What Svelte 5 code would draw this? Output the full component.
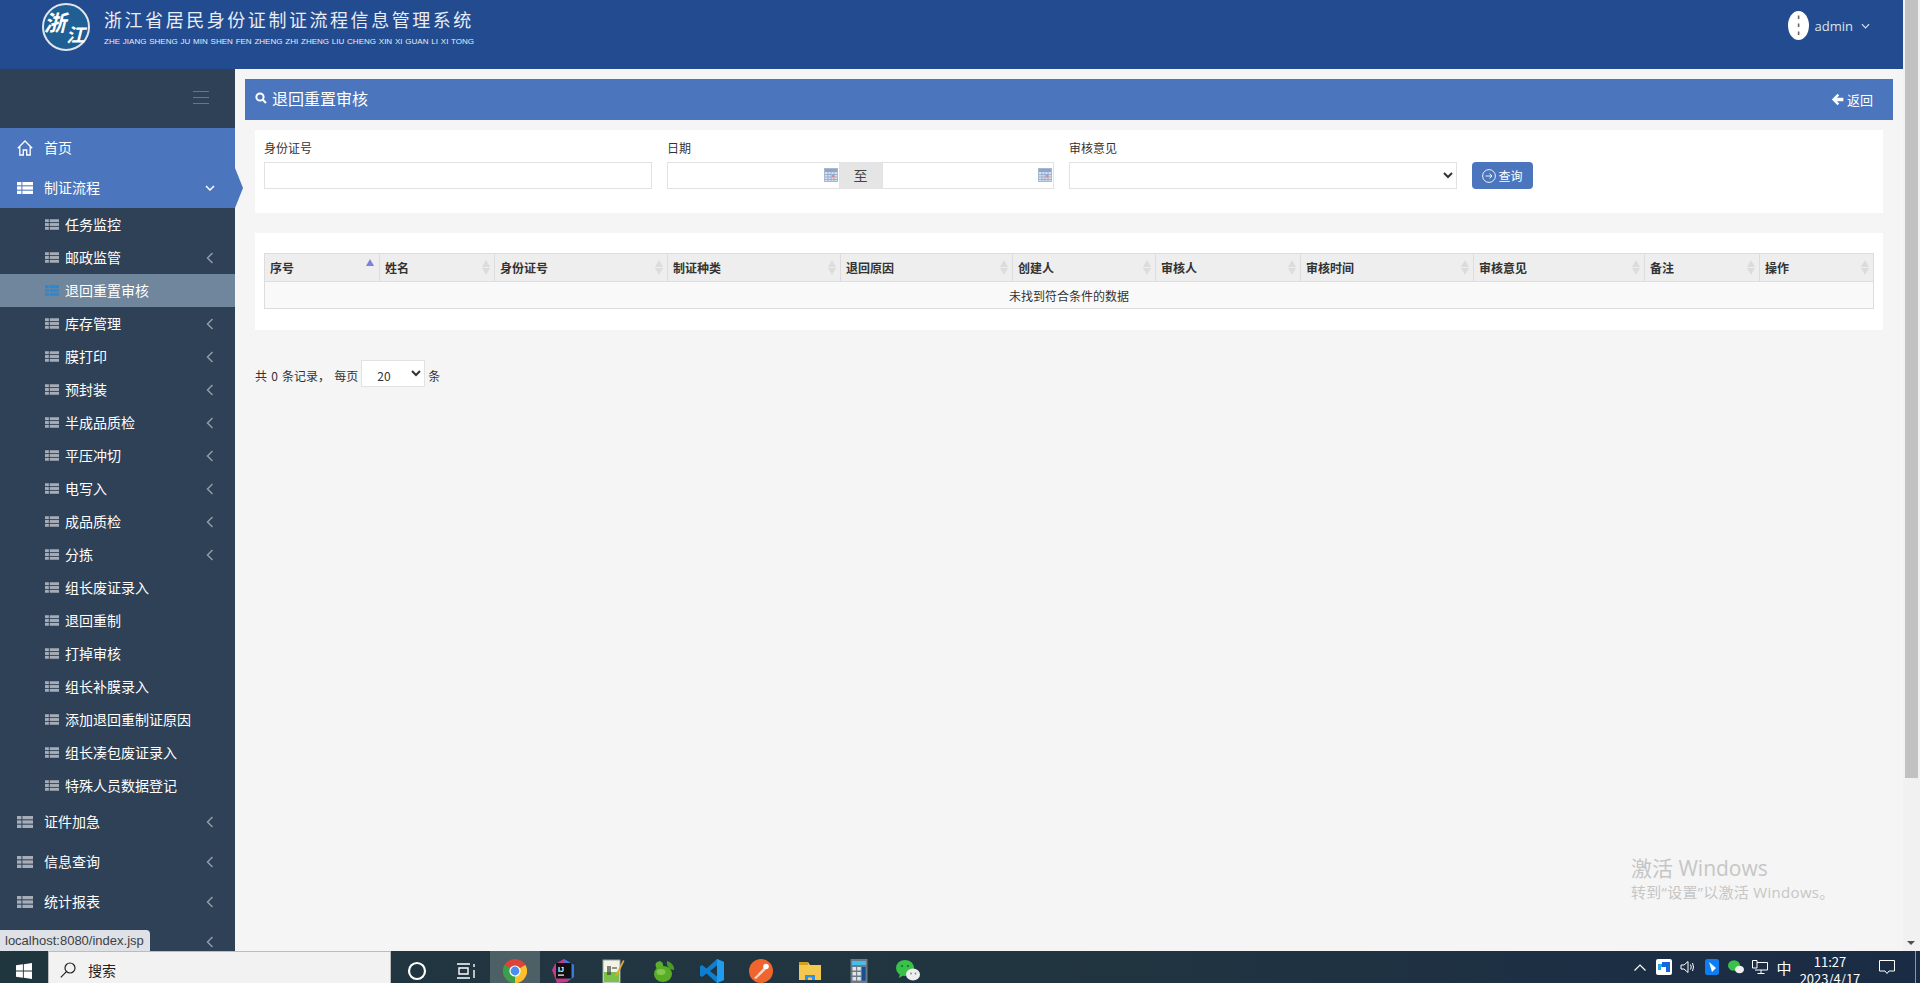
<script>
    const subMenu = [
        { name: '任务监控' },
        { name: '邮政监管', more: true },
        { name: '退回重置审核', active: true },
        { name: '库存管理', more: true },
        { name: '膜打印', more: true },
        { name: '预封装', more: true },
        { name: '半成品质检', more: true },
        { name: '平压冲切', more: true },
        { name: '电写入', more: true },
        { name: '成品质检', more: true },
        { name: '分拣', more: true },
        { name: '组长废证录入' },
        { name: '退回重制' },
        { name: '打掉审核' },
        { name: '组长补膜录入' },
        { name: '添加退回重制证原因' },
        { name: '组长凑包废证录入' },
        { name: '特殊人员数据登记' }
    ];

    const lowerMenu = ['证件加急', '信息查询', '统计报表', ''];

    const columns = [
        { title: '序号', width: 115, sorted: true },
        { title: '姓名', width: 115 },
        { title: '身份证号', width: 173 },
        { title: '制证种类', width: 173 },
        { title: '退回原因', width: 172 },
        { title: '创建人', width: 143 },
        { title: '审核人', width: 145 },
        { title: '审核时间', width: 173 },
        { title: '审核意见', width: 171 },
        { title: '备注', width: 115 },
        { title: '操作', width: 114 }
    ];
</script>

{#snippet listIcon()}
    <svg class="list-icon" viewBox="0 0 16 12">
        <rect x="0" y="0" width="4.4" height="3.3" />
        <rect x="5.4" y="0" width="10.6" height="3.3" />
        <rect x="0" y="4.35" width="4.4" height="3.3" />
        <rect x="5.4" y="4.35" width="10.6" height="3.3" />
        <rect x="0" y="8.7" width="4.4" height="3.3" />
        <rect x="5.4" y="8.7" width="10.6" height="3.3" />
    </svg>
{/snippet}

{#snippet chevronLeft()}
    <svg class="chev-left" viewBox="0 0 8 12"><path d="M6.5 1 L1.5 6 L6.5 11" /></svg>
{/snippet}

{#snippet calendar()}
    <svg class="calendar" viewBox="0 0 14 14">
        <rect x="0.5" y="0.5" width="13" height="13" fill="#d5dff0" stroke="#a9b7cf" />
        <rect x="1" y="1" width="12" height="3" fill="#8fa5c8" />
        <path d="M1 6.5h12M1 9h12M1 11.5h12M4 4v9M7 4v9M10 4v9" stroke="#8ea6cc" stroke-width="0.8" />
        <rect x="8" y="7" width="2.4" height="2.2" fill="#e08a7a" />
    </svg>
{/snippet}

<div class="page">
    <div class="upper">
        <header class="topbar">
            <div class="brand">
                <svg class="logo" viewBox="0 0 48 48">
                    <circle cx="24" cy="24" r="23" fill="#1f5f94" stroke="#dfe6ee" stroke-width="2" />
                    <text x="2" y="28" class="logo-a">浙</text>
                    <text x="24" y="39" class="logo-b">江</text>
                </svg>
                <div class="brand-text">
                    <div class="brand-cn">浙江省居民身份证制证流程信息管理系统</div>
                    <div class="brand-en">ZHE JIANG SHENG JU MIN SHEN FEN ZHENG ZHI ZHENG LIU CHENG XIN XI GUAN LI XI TONG</div>
                </div>
            </div>
            <div class="user">
                <svg class="avatar" viewBox="0 0 21 29">
                    <ellipse cx="10.5" cy="14.5" rx="10.5" ry="14.5" fill="#fff" />
                    <rect x="9.8" y="4.5" width="1.6" height="3.5" fill="#666" />
                    <rect x="9.8" y="12.5" width="1.6" height="3.5" fill="#666" />
                    <rect x="9.8" y="20.5" width="1.6" height="3.5" fill="#666" />
                </svg>
                <span>admin</span>
                <svg class="user-chev" viewBox="0 0 10 6"><path d="M1 1 L5 5 L9 1" /></svg>
            </div>
        </header>

        <div class="body">
            <nav class="sidebar">
                <div class="toggle">
                    <span></span><span></span><span></span>
                </div>
                <div class="top-item blue">
                    <svg class="home" viewBox="0 0 16 16">
                        <path d="M0.8 8.2 L8 1 L15.2 8.2 M2.8 6.8 V15 H6.3 V10 H9.7 V15 H13.2 V6.8" />
                    </svg>
                    <span>首页</span>
                </div>
                <div class="top-item blue open">
                    {@render listIcon()}
                    <span>制证流程</span>
                    <svg class="chev-down" viewBox="0 0 10 6"><path d="M1 1 L5 5 L9 1" /></svg>
                </div>
                {#each subMenu as item}
                    <div class="sub-item" class:active={item.active}>
                        {@render listIcon()}
                        <span>{item.name}</span>
                        {#if item.more}{@render chevronLeft()}{/if}
                    </div>
                {/each}
                {#each lowerMenu as name}
                    <div class="top-item">
                        {@render listIcon()}
                        <span>{name}</span>
                        {@render chevronLeft()}
                    </div>
                {/each}
            </nav>

            <main class="content">
                <div class="title-bar">
                    <svg class="search" viewBox="0 0 12 12">
                        <circle cx="5" cy="5" r="3.6" />
                        <path d="M7.8 7.8 L11 11" />
                    </svg>
                    <span class="title">退回重置审核</span>
                    <a class="back" href="#back">
                        <svg viewBox="0 0 12 12"><path d="M6 0.8 L0.8 6 L6 11.2 L7.6 9.6 L5.4 7.6 H11.4 V4.4 H5.4 L7.6 2.4 Z" /></svg>
                        返回
                    </a>
                </div>

                <section class="card filter">
                    <div class="field">
                        <label for="idcard">身份证号</label>
                        <input id="idcard" type="text" />
                    </div>
                    <div class="field narrow">
                        <label for="from">日期</label>
                        <div class="date-range">
                            <div class="date-input">
                                <input id="from" type="text" />
                                {@render calendar()}
                            </div>
                            <span class="addon">至</span>
                            <div class="date-input">
                                <input type="text" />
                                {@render calendar()}
                            </div>
                        </div>
                    </div>
                    <div class="field">
                        <label for="opinion">审核意见</label>
                        <select id="opinion"><option></option></select>
                    </div>
                    <button class="query" type="button">
                        <svg viewBox="0 0 14 14">
                            <circle cx="7" cy="7" r="6.4" />
                            <path d="M3.5 7 H10 M7.5 4.5 L10 7 L7.5 9.5" />
                        </svg>
                        查询
                    </button>
                </section>

                <section class="card table-card">
                    <table>
                        <colgroup>
                            {#each columns as col}
                                <col style="width: {col.width}px" />
                            {/each}
                        </colgroup>
                        <thead>
                            <tr>
                                {#each columns as col}
                                    <th>
                                        {col.title}
                                        <span class="sort" class:sorted={col.sorted}>
                                            <i class="up"></i>
                                            {#if !col.sorted}<i class="down"></i>{/if}
                                        </span>
                                    </th>
                                {/each}
                            </tr>
                        </thead>
                        <tbody>
                            <tr><td colspan={columns.length}>未找到符合条件的数据</td></tr>
                        </tbody>
                    </table>
                </section>

                <div class="pager">
                    <span>共 0 条记录， 每页</span>
                    <select><option>20</option></select>
                    <span>条</span>
                </div>
            </main>
        </div>
    </div>

    <footer class="taskbar">
        <div class="start">
            <svg viewBox="0 0 16 16"><path d="M0 2.3 L6.9 1.3 V7.5 H0 Z M7.8 1.2 L16 0 V7.5 H7.8 Z M0 8.4 H6.9 V14.7 L0 13.7 Z M7.8 8.4 H16 V16 L7.8 14.8 Z" /></svg>
        </div>
        <div class="searchbox">
            <svg viewBox="0 0 16 16"><circle cx="10" cy="6" r="5" /><path d="M6.4 9.6 L0.8 15.4" /></svg>
            <span>搜索</span>
        </div>
        <div class="apps">
            <div class="app">
                <svg viewBox="0 0 24 24" class="plain"><circle cx="12" cy="12" r="8" fill="none" stroke="#fff" stroke-width="2.2" /></svg>
            </div>
            <div class="app">
                <svg viewBox="0 0 24 24" class="plain"><path d="M3 5h13M3 19h13M5 9h9v6H5zM20 5v3M20 11v8" fill="none" stroke="#fff" stroke-width="1.4" /></svg>
            </div>
            <div class="app current">
                <svg viewBox="0 0 24 24">
                    <circle cx="12" cy="12" r="12" fill="#db4437" />
                    <path d="M12 12 L22.4 6 A12 12 0 0 1 12 24 Z" fill="#fbc02d" />
                    <path d="M12 12 L12 24 A12 12 0 0 1 1.6 6 Z" fill="#3a9f4a" />
                    <circle cx="12" cy="12" r="5.6" fill="#fff" />
                    <circle cx="12" cy="12" r="4.4" fill="#4b8df0" />
                </svg>
            </div>
            <div class="app">
                <svg viewBox="0 0 24 24">
                    <path d="M3 5 L12 0 L22 6 V18 L15 23 L5 24 L0 11 Z" fill="#c43a8e" />
                    <path d="M12 0 L22 6 V18 L16 21 Z" fill="#2f7fe0" />
                    <rect x="4" y="4" width="15.5" height="15.5" fill="#111" />
                    <text x="6" y="12.5" class="ij">IJ</text>
                    <rect x="6" y="15.5" width="6" height="1.2" fill="#fff" />
                </svg>
            </div>
            <div class="app">
                <svg viewBox="0 0 24 24">
                    <rect x="2" y="1" width="17" height="23" fill="#f1f3e6" stroke="#9aa3a0" />
                    <rect x="3" y="13" width="15" height="10" fill="#7cc04a" />
                    <path d="M7 7v9M9 7v9M11 9h5" stroke="#333" stroke-width="1.2" />
                    <path d="M22 1 L15 15 L13.5 18 L16.5 16 L23.5 2 Z" fill="#e8a33a" />
                </svg>
            </div>
            <div class="app">
                <svg viewBox="0 0 24 24">
                    <path d="M5 4 C9 0 13 3 12 8 C8 12 3 9 5 4 Z" fill="#5cae2e" />
                    <path d="M16 2 C20 3 24 7 23 11 C19 11 15 8 16 2 Z" fill="#4a9a25" />
                    <ellipse cx="12" cy="15" rx="9" ry="8" fill="#58ac26" />
                    <ellipse cx="10" cy="13" rx="4.5" ry="3" fill="#83c94f" />
                </svg>
            </div>
            <div class="app">
                <svg viewBox="0 0 24 24">
                    <path d="M17 0 L24 3 V21 L17 24 L6.5 14.5 L2 18 L0 16.8 V7.2 L2 6 L6.5 9.5 Z M17 6.5 L10 12 L17 17.5 Z" fill="#0e7fcf" />
                    <path d="M17 0 L24 3 V21 L17 24 Z" fill="#1f9cf0" />
                </svg>
            </div>
            <div class="app">
                <svg viewBox="0 0 24 24">
                    <circle cx="12" cy="12" r="12" fill="#f0642e" />
                    <path d="M5 19 L15 8.5 L17 10.5 L7 20 Z" fill="#fbd6c4" />
                    <circle cx="17" cy="7.5" r="2.8" fill="#fff" />
                </svg>
            </div>
            <div class="app">
                <svg viewBox="0 0 24 24">
                    <path d="M1 3 H10 L12 6 H23 V21 H1 Z" fill="#f4c84e" />
                    <rect x="1" y="3" width="9" height="3" fill="#d69e1c" />
                    <path d="M7 21 V16 H17 V21 H14 V18.5 H10 V21 Z" fill="#2f8fe0" />
                </svg>
            </div>
            <div class="app">
                <svg viewBox="0 0 24 24">
                    <rect x="3.5" y="0" width="17" height="24" fill="#6d7a85" />
                    <rect x="5" y="2" width="14" height="4" fill="#3fc0ee" />
                    <path d="M5.5 8h3.6v3.6H5.5zM10.2 8h3.6v3.6h-3.6zM5.5 13h3.6v3.6H5.5zM10.2 13h3.6v3.6h-3.6zM5.5 18h3.6v3.6H5.5zM10.2 18h3.6v3.6h-3.6z" fill="#dfe4e8" />
                    <rect x="15" y="8" width="3.6" height="13.6" fill="#174f95" />
                </svg>
            </div>
            <div class="app">
                <svg viewBox="0 0 24 24">
                    <ellipse cx="9" cy="9" rx="9" ry="8" fill="#39c14a" />
                    <path d="M4 14 L3 19 L8 16 Z" fill="#39c14a" />
                    <ellipse cx="17" cy="15.5" rx="7" ry="6" fill="#eeeeee" />
                    <circle cx="6" cy="7" r="1.1" fill="#1d6b2a" />
                    <circle cx="12" cy="7" r="1.1" fill="#1d6b2a" />
                    <circle cx="15" cy="14.5" r="0.9" fill="#888" />
                    <circle cx="19.5" cy="14.5" r="0.9" fill="#888" />
                </svg>
            </div>
        </div>
        <div class="tray">
            <div class="tray-cell">
                <svg viewBox="0 0 12 7" class="t-caret"><path d="M0.5 6.5 L6 1 L11.5 6.5" /></svg>
            </div>
            <div class="tray-cell">
                <svg viewBox="0 0 16 16" class="t-16">
                    <rect width="16" height="16" rx="2" fill="#fff" />
                    <path d="M2 5 H8 V8 H5 V11 H2 Z" fill="#23a9e8" />
                    <path d="M6 3 H14 V13 H10 V8 H6 Z" fill="#1667d9" />
                </svg>
            </div>
            <div class="tray-cell">
                <svg viewBox="0 0 16 16" class="t-16 stroke">
                    <path d="M1 6 H4 L8 2.5 V13.5 L4 10 H1 Z M10.5 5.5 Q12 8 10.5 10.5 M12.5 4 Q14.5 8 12.5 12" />
                </svg>
            </div>
            <div class="tray-cell">
                <svg viewBox="0 0 16 16" class="t-16">
                    <rect width="14" height="16" x="1" rx="2.5" fill="#0f7cf0" />
                    <path d="M5 3 L12 9 L8 13 Z" fill="#fff" />
                </svg>
            </div>
            <div class="tray-cell">
                <svg viewBox="0 0 16 16" class="t-16">
                    <ellipse cx="6" cy="6.5" rx="6" ry="5.2" fill="#39c14a" />
                    <ellipse cx="11.5" cy="10.5" rx="4.5" ry="3.8" fill="#eeeeee" />
                </svg>
            </div>
            <div class="tray-cell">
                <svg viewBox="0 0 16 16" class="t-16 stroke">
                    <path d="M0.5 1.5 H5 V9 H0.5 Z M5 3.5 H15.5 V11 H3 M9 11 V14.5 M5.5 14.5 H12.5" />
                </svg>
            </div>
            <div class="tray-cell ime">中</div>
            <div class="clock">
                <div>11:27</div>
                <div>2023/4/17</div>
            </div>
            <div class="notice">
                <svg viewBox="0 0 16 16" class="t-16 stroke"><path d="M0.5 1.5 H15.5 V12 H10 L8 14.5 L6 12 H0.5 Z" /></svg>
            </div>
            <div class="show-desktop"></div>
        </div>
    </footer>

    <div class="scrollbar">
        <div class="thumb"></div>
        <i class="scroll-arrow"></i>
    </div>
    <div class="status-bubble">localhost:8080/index.jsp</div>
    <div class="watermark">
        <div class="wm-big">激活 Windows</div>
        <div class="wm-small">转到“设置”以激活 Windows。</div>
    </div>
</div>

<style>
    :global(body) {
        margin: 0;
        background: #f5f5f5;
    }
    .page {
        position: relative;
        height: 983px;
        overflow: hidden;
        display: flex;
        flex-direction: column;
        font-family: "Noto Sans CJK SC", "Noto Sans", sans-serif;
        font-size: 12px;
        color: #333;
    }
    .upper {
        flex: 1;
        min-height: 0;
        display: flex;
        flex-direction: column;
        margin-right: 17px;
    }

    /* header */
    .topbar {
        height: 69px;
        flex: none;
        background: #234b8f;
        display: flex;
        justify-content: space-between;
        align-items: flex-start;
    }
    .brand {
        display: flex;
        padding: 3px 0 0 42px;
        gap: 14px;
    }
    .logo {
        width: 48px;
        height: 48px;
    }
    .logo text {
        fill: #fff;
        font-weight: 700;
        font-style: italic;
    }
    .logo-a {
        font-size: 22px;
    }
    .logo-b {
        font-size: 19px;
    }
    .brand-text {
        width: 370px;
        color: #e8edf5;
    }
    .brand-cn {
        font-size: 18px;
        letter-spacing: 2.55px;
        line-height: 28px;
        margin-top: 2px;
        white-space: nowrap;
    }
    .brand-en {
        font-family: "Liberation Sans", sans-serif;
        font-size: 8px;
        line-height: 10px;
        margin-top: 4px;
        white-space: nowrap;
        text-align: justify;
        text-align-last: justify;
    }
    .user {
        display: flex;
        align-items: center;
        height: 29px;
        margin: 11px 33px 0 0;
        color: #dbe3f0;
        font-family: "Open Sans", sans-serif;
        font-size: 13px;
    }
    .avatar {
        width: 21px;
        height: 29px;
        margin-right: 6px;
    }
    .user-chev {
        width: 9px;
        height: 6px;
        margin-left: 8px;
        fill: none;
        stroke: #dbe3f0;
        stroke-width: 1.3;
    }

    .body {
        flex: 1;
        min-height: 0;
        display: flex;
    }

    /* sidebar */
    .sidebar {
        width: 235px;
        flex: none;
        background: #2f4156;
        color: #fff;
        font-size: 14px;
    }
    .toggle {
        height: 59px;
        padding: 22px 26px 0 0;
        box-sizing: border-box;
        display: flex;
        flex-direction: column;
        align-items: flex-end;
        gap: 5px;
    }
    .toggle span {
        width: 16px;
        height: 1px;
        background: #67778a;
    }
    .top-item {
        position: relative;
        height: 40px;
        display: flex;
        align-items: center;
        padding-left: 17px;
    }
    .top-item.blue {
        background: #4b76bd;
    }
    .top-item.open::after {
        content: "";
        position: absolute;
        left: 235px;
        top: 0;
        width: 8px;
        height: 40px;
        background: #4b76bd;
        clip-path: polygon(0 0, 100% 50%, 0 100%);
    }
    .top-item span {
        margin: 0 0 2px 11px;
    }
    .top-item .list-icon {
        width: 16px;
        height: 12px;
        fill: #a6adb8;
    }
    .top-item.blue .list-icon {
        fill: #fff;
    }
    .home {
        width: 16px;
        height: 16px;
        fill: none;
        stroke: #fff;
        stroke-width: 1.3;
    }
    .chev-down {
        position: absolute;
        left: 205px;
        top: 17px;
        width: 10px;
        height: 6px;
        fill: none;
        stroke: #fff;
        stroke-width: 1.5;
    }
    .chev-left {
        position: absolute;
        left: 206px;
        top: 50%;
        margin-top: -6px;
        width: 8px;
        height: 12px;
        fill: none;
        stroke: #8f9caa;
        stroke-width: 1.5;
    }
    .sub-item {
        position: relative;
        height: 33px;
        display: flex;
        align-items: center;
        padding-left: 45px;
    }
    .sub-item span {
        margin: 0 0 2px 6px;
    }
    .sub-item .list-icon {
        width: 14px;
        height: 11px;
        fill: #a6adb8;
    }
    .sub-item.active {
        background: #6f869c;
    }
    .sub-item.active .list-icon {
        fill: #2f87d0;
    }

    /* main */
    .content {
        flex: 1;
        min-width: 0;
        padding: 10px;
    }
    .title-bar {
        height: 41px;
        box-sizing: border-box;
        background: #4b76bd;
        color: #fff;
        display: flex;
        align-items: center;
        padding: 0 20px 0 10px;
    }
    .search {
        width: 12px;
        height: 12px;
        margin-bottom: 3px;
        fill: none;
        stroke: #fff;
        stroke-width: 2;
    }
    .title {
        margin: 0 0 4px 5px;
        font-size: 16px;
    }
    .back {
        margin-left: auto;
        display: flex;
        align-items: center;
        gap: 3px;
        color: #fff;
        font-size: 13px;
        text-decoration: none;
    }
    .back svg {
        width: 13px;
        height: 13px;
        fill: #fff;
    }
    .card {
        background: #fff;
        margin: 10px 10px 0;
    }

    /* filter */
    .filter {
        height: 83px;
        box-sizing: border-box;
        padding: 10px 9px 0;
        display: flex;
        gap: 15px;
    }
    .field {
        width: 388px;
    }
    .field.narrow {
        width: 387px;
    }
    .field label {
        display: block;
        line-height: 16px;
        margin-bottom: 6px;
    }
    input,
    select {
        box-sizing: border-box;
        width: 100%;
        height: 27px;
        border: 1px solid #e2e2e2;
        background: #fff;
        border-radius: 0;
        font: inherit;
        color: #333;
        outline: none;
    }
    .date-range {
        display: flex;
        height: 27px;
    }
    .date-input {
        position: relative;
        flex: 1;
    }
    .calendar {
        position: absolute;
        right: 2px;
        top: 6px;
        width: 14px;
        height: 14px;
    }
    .addon {
        width: 42px;
        flex: none;
        background: #e5e5e5;
        color: #444;
        font-size: 14px;
        text-align: center;
        line-height: 27px;
    }
    .query {
        align-self: flex-start;
        margin-top: 22px;
        width: 61px;
        height: 27px;
        border: none;
        border-radius: 4px;
        background: #4b76bd;
        color: #fff;
        font: inherit;
        display: flex;
        align-items: center;
        justify-content: center;
        gap: 2px;
        padding: 0;
    }
    .query svg {
        width: 14px;
        height: 14px;
        fill: none;
        stroke: #fff;
        stroke-width: 0.9;
    }

    /* table */
    .table-card {
        margin-top: 20px;
        padding: 20px 10px 21px 9px;
    }
    table {
        width: 100%;
        table-layout: fixed;
        border-collapse: collapse;
    }
    th,
    td {
        border: 1px solid #ddd;
        padding: 0;
    }
    th {
        position: relative;
        height: 27px;
        background: #eee;
        text-align: left;
        padding-left: 5px;
        font-weight: 700;
        color: #333;
    }
    td {
        height: 26px;
        background: #f9f9f9;
        text-align: center;
    }
    .sort {
        position: absolute;
        right: 4px;
        top: 6px;
    }
    .sort i {
        display: block;
        width: 0;
        height: 0;
        border-left: 4.5px solid transparent;
        border-right: 4.5px solid transparent;
    }
    .sort .up {
        border-bottom: 7px solid #dcdcdc;
        margin-bottom: 1px;
    }
    .sort .down {
        border-top: 7px solid #dcdcdc;
    }
    .sort.sorted {
        top: 5px;
        right: 5px;
    }
    .sort.sorted .up {
        border-bottom-color: #7b82dc;
    }

    .pager {
        margin: 30px 10px 0;
        display: flex;
        align-items: center;
        gap: 3px;
        word-spacing: 1.5px;
    }
    .pager span {
        padding-top: 4px;
    }
    .pager select {
        width: 64px;
        padding: 3px 0 0 11px;
    }

    /* taskbar */
    .taskbar {
        position: relative;
        height: 32px;
        flex: none;
        overflow: hidden;
        display: flex;
        background: linear-gradient(90deg, #20363f 0%, #213540 55%, #1a2b45 100%);
    }
    .start {
        width: 48px;
        flex: none;
        padding: 12px 0 0 16px;
        box-sizing: border-box;
    }
    .start svg {
        display: block;
        width: 16px;
        height: 16px;
        fill: #fff;
    }
    .searchbox {
        width: 343px;
        flex: none;
        box-sizing: border-box;
        background: #f2f2f2;
        border-top: 1px solid #bcbcbc;
        border-left: 1px solid #bcbcbc;
        border-right: 1px solid #bcbcbc;
        display: flex;
        align-items: center;
        padding: 4px 0 0 11px;
        font-size: 14px;
        color: #222;
    }
    .searchbox svg {
        width: 16px;
        height: 16px;
        fill: none;
        stroke: #222;
        stroke-width: 1.2;
        margin-right: 12px;
    }
    .apps {
        display: flex;
        margin-left: 1px;
    }
    .app {
        width: 49.2px;
        flex: none;
        display: flex;
        justify-content: center;
        padding-top: 8px;
        box-sizing: border-box;
    }
    .app svg {
        width: 24px;
        height: 24px;
    }
    .app.current {
        background: #4c6066;
    }
    .ij {
        font-family: "Liberation Sans", sans-serif;
        font-size: 7px;
        font-weight: 700;
        fill: #fff;
    }
    .tray {
        position: absolute;
        left: 1628px;
        top: 0;
        height: 32px;
        display: flex;
        color: #fff;
    }
    .tray-cell {
        width: 24px;
        display: flex;
        align-items: center;
        justify-content: center;
    }
    .t-16 {
        width: 16px;
        height: 16px;
    }
    .t-16.stroke {
        fill: none;
        stroke: #fff;
        stroke-width: 1;
    }
    .t-caret {
        width: 12px;
        height: 7px;
        fill: none;
        stroke: #fff;
        stroke-width: 1.2;
    }
    .ime {
        font-size: 15px;
    }
    .clock {
        width: 68px;
        padding-top: 2px;
        text-align: center;
        font-size: 13px;
        line-height: 17px;
    }
    .notice {
        width: 46px;
        display: flex;
        align-items: center;
        justify-content: center;
    }
    .show-desktop {
        width: 0;
        margin-left: 5px;
        border-left: 1px solid #8b96a6;
    }

    /* things that sit over the page */
    .scrollbar {
        position: absolute;
        right: 0;
        top: 0;
        bottom: 32px;
        width: 17px;
        background: #f1f1f1;
    }
    .thumb {
        margin-left: 2px;
        width: 13px;
        height: 778px;
        background: #c1c1c1;
    }
    .scroll-arrow {
        position: absolute;
        left: 4px;
        bottom: 6px;
        width: 0;
        height: 0;
        border-left: 4px solid transparent;
        border-right: 4px solid transparent;
        border-top: 4px solid #505050;
    }
    .status-bubble {
        position: absolute;
        left: 0;
        top: 930px;
        width: 150px;
        height: 21px;
        box-sizing: border-box;
        padding-left: 5px;
        background: #dee1e6;
        border-top-right-radius: 4px;
        color: #3c4043;
        font-family: "Liberation Sans", sans-serif;
        font-size: 13px;
        line-height: 21px;
        white-space: nowrap;
    }
    .watermark {
        position: absolute;
        left: 1631px;
        top: 853px;
        color: #c6c6c6;
        font-family: "Open Sans", "Noto Sans CJK SC", sans-serif;
        white-space: nowrap;
    }
    .wm-big {
        font-size: 21px;
        line-height: 30px;
    }
    .wm-small {
        font-size: 15px;
        letter-spacing: 0.3px;
        line-height: 20px;
        margin-top: -1px;
    }
</style>
